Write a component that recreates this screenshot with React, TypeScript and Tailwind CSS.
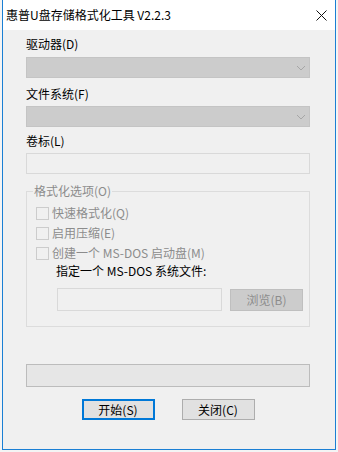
const font = { fontFamily: '"Noto Sans CJK SC", "Noto Sans", sans-serif' };

function Combo() {
  return (
    <div className="flex h-[21px] w-[284px] items-center justify-end border border-[#c4c4c4] bg-[#cccccc] pr-[3px]">
      <svg width="10" height="6" viewBox="0 0 10 6" fill="none">
        <path d="M1 1L5 5L9 1" stroke="#a6a6a6" strokeWidth="1" />
      </svg>
    </div>
  );
}

function Check({ label }: { label: string }) {
  return (
    <div className="flex h-[20px] items-center gap-[3px] pl-[9px]">
      <div className="h-[13px] w-[13px] border border-[#cccccc] bg-[#f0f0f0]" />
      <span className="text-[12px] leading-[16px] text-[#8c8c8c]">{label}</span>
    </div>
  );
}

export default function App() {
  return (
    <div className="h-[452px] w-[338px] bg-[#f4f4f4]" style={font}>
      <div className="ml-[2px] flex h-[450px] w-[334px] flex-col border-x border-b border-[#1a7fd4] bg-[#f0f0f0]">
        <div className="flex h-[30px] items-center justify-between bg-white pl-[3px] pr-[8px]">
          <span className="text-[12px] leading-[16px] text-black">惠普U盘存储格式化工具 V2.2.3</span>
          <svg width="11" height="11" viewBox="0 0 11 11">
            <path d="M0.5 0.5L10.5 10.5M10.5 0.5L0.5 10.5" stroke="#111" strokeWidth="1" />
          </svg>
        </div>

        <div className="flex flex-col pl-[23px] text-[12px] leading-[16px] text-black">
          <div className="mt-[6px]">驱动器(D)</div>
          <div className="mt-[5px]"><Combo /></div>
          <div className="mt-[8px]">文件系统(F)</div>
          <div className="mt-[4px]"><Combo /></div>
          <div className="mt-[6px]">卷标(L)</div>
          <div className="mt-[4px] h-[21px] w-[284px] border border-[#d9d9d9] bg-[#f0f0f0]" />

          <fieldset className="mt-[9px] w-[284px] border border-[#dcdcdc] pb-[15px]">
            <legend className="ml-[6px] px-px text-[#8c8c8c]">格式化选项(O)</legend>
            <div className="mt-[4px]" />
            <Check label="快速格式化(Q)" />
            <Check label="启用压缩(E)" />
            <Check label="创建一个 MS-DOS 启动盘(M)" />
            <div className="pl-[29px]">指定一个 MS-DOS 系统文件:</div>
            <div className="mt-[9px] flex items-center gap-[8px] pl-[30px]">
              <div className="h-[23px] w-[165px] border border-[#d9d9d9] bg-[#f0f0f0]" />
              <div className="flex h-[22px] w-[73px] items-center justify-center border border-[#bfbfbf] bg-[#cccccc] text-[#8c8c8c]">
                浏览(B)
              </div>
            </div>
          </fieldset>

          <div className="mt-[37px] h-[23px] w-[284px] border border-[#bcbcbc] bg-[#e6e6e6]" />

          <div className="mt-[12px] flex w-[284px] justify-center gap-[27px]">
            <div className="flex h-[21px] w-[73px] items-center justify-center border-2 border-[#0078d7] bg-[#e1e1e1]">
              开始(S)
            </div>
            <div className="flex h-[21px] w-[73px] items-center justify-center border border-[#adadad] bg-[#e1e1e1]">
              关闭(C)
            </div>
          </div>
        </div>
      </div>
    </div>
  );
}
